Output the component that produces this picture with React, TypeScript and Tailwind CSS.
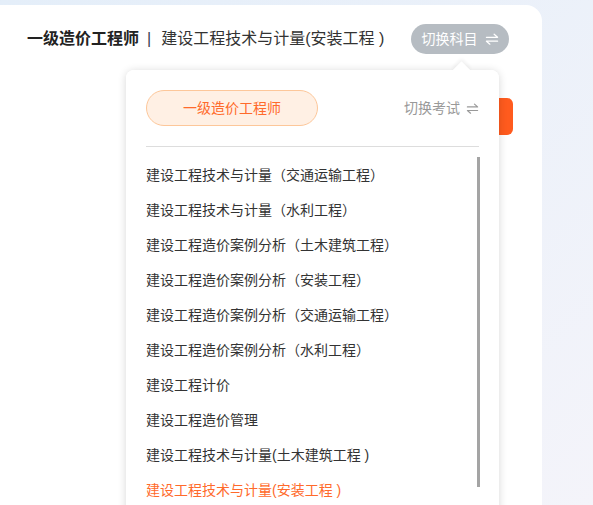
import React from 'react';

const subjects = [
  '建设工程技术与计量（交通运输工程）',
  '建设工程技术与计量（水利工程）',
  '建设工程造价案例分析（土木建筑工程）',
  '建设工程造价案例分析（安装工程）',
  '建设工程造价案例分析（交通运输工程）',
  '建设工程造价案例分析（水利工程）',
  '建设工程计价',
  '建设工程造价管理',
  '建设工程技术与计量(土木建筑工程 )',
  '建设工程技术与计量(安装工程 )',
];

const SwapIcon: React.FC<{ className?: string }> = ({ className }) => (
  <svg viewBox="0 0 16 14" fill="none" stroke="currentColor" strokeWidth="1.5" strokeLinecap="round" strokeLinejoin="round" className={className}>
    <path d="M1.5 5H14.5L10.5 1.5" />
    <path d="M14.5 9.5H1.5L5.5 13" />
  </svg>
);

const App: React.FC = () => {
  const active = subjects.length - 1;
  return (
    <div className="w-[593px] h-[505px] overflow-hidden bg-gradient-to-br from-[#e4eef9] to-[#f4f4fa] pt-[5px] font-['Liberation_Sans','Noto_Sans_CJK_SC',sans-serif]">
      <div className="relative w-[542px] h-[520px] bg-white rounded-tr-2xl">
        {/* header */}
        <div className="flex items-center justify-between pl-[27px] pr-[33px] pt-[19px]">
          <div className="flex items-center text-[16px] leading-none text-[#333]">
            <span className="font-bold text-[#222]">一级造价工程师</span>
            <span className="ml-[8px] text-[#3a4250]">|</span>
            <span className="ml-[10px]">建设工程技术与计量(安装工程 )</span>
          </div>
          <button className="flex items-center h-[30px] w-[98px] justify-center gap-[7px] rounded-full bg-[#b6bcc2] text-white text-[14px] leading-none">
            切换科目
            <SwapIcon className="w-[14px] h-[12px]" />
          </button>
        </div>

        {/* orange button under the popover */}
        <div className="absolute left-[420px] top-[93px] w-[93px] h-[37px] rounded-md bg-[#ff5b1e]" />

        {/* popover */}
        <div className="absolute left-[126px] top-[65px] w-[373px] h-[460px] bg-white rounded-lg shadow-[0_1px_8px_rgba(0,0,0,0.16)]">
          <div className="absolute -top-[6px] left-[329px] w-[13px] h-[13px] rotate-45 bg-white shadow-[-2px_-2px_4px_rgba(0,0,0,0.06)]" />
          <div className="relative bg-white rounded-lg">
            <div className="flex items-center justify-between px-[20px] pt-[20px]">
              <div className="flex items-center justify-center w-[172px] h-[36px] rounded-full border border-[#fdc79a] bg-[#fff0e4] text-[#ff6a2b] text-[14px] leading-none">
                一级造价工程师
              </div>
              <div className="flex items-center gap-[6px] text-[14px] leading-none text-[#999]">
                切换考试
                <SwapIcon className="w-[13px] h-[11px]" />
              </div>
            </div>
            <div className="mx-[20px] mt-[20px] h-px bg-[#dddddd]" />
            <div className="flex pl-[20px] pr-[19px] mt-[10px]">
              <ul className="flex-1">
                {subjects.map((s, i) => (
                  <li
                    key={s}
                    className={`h-[35px] flex items-center text-[14px] leading-none ${i === active ? 'text-[#ff6a2b]' : 'text-[#333]'}`}
                  >
                    {s}
                  </li>
                ))}
              </ul>
              <div className="w-[3px] h-[330px] bg-[#a4a4a4]" />
            </div>
          </div>
        </div>
      </div>
    </div>
  );
};

export default App;
